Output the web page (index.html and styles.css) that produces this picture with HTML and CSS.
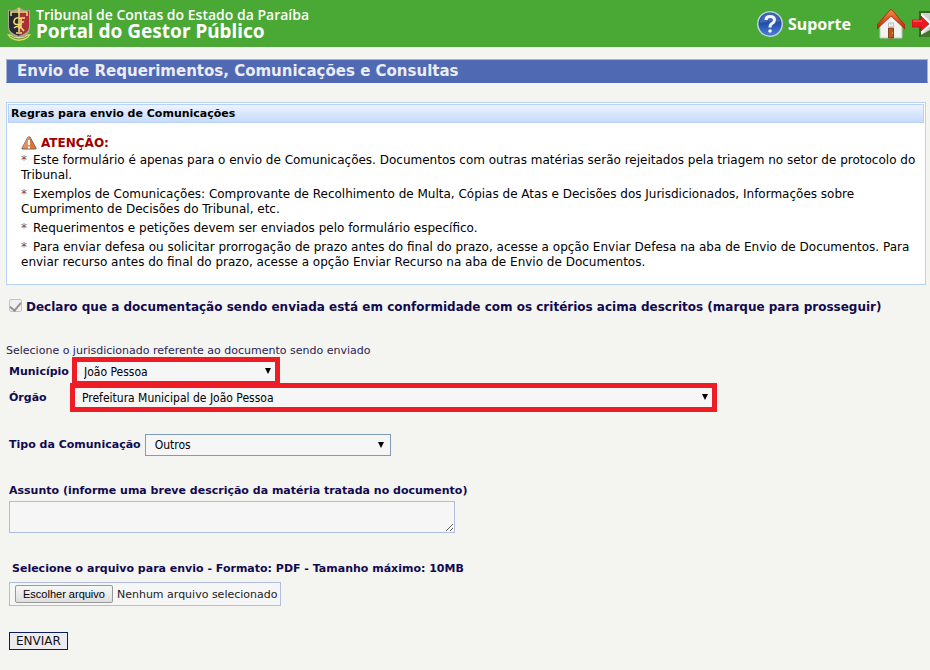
FILE: index.html
```html
<!DOCTYPE html>
<html lang="pt-BR">
<head>
<meta charset="utf-8">
<title>Portal do Gestor Público</title>
<link rel="stylesheet" href="styles.css">
</head>
<body>
<header class="topbar">
  <div class="brand">
    <svg class="crest" viewBox="0 0 24 34" aria-hidden="true">
      <path d="M1 3Q6 4 9 2L12 0l3 2q3 2 8 1v18q0 7-11 11Q1 28 1 21z" fill="#a9a58f"/>
      <path d="M2 4h10v25Q2 26 2 20z" fill="#292936"/>
      <path d="M12 4h10v16q0 6-10 9z" fill="#a92f3b"/>
      <path d="M4 9V5h16v4M12 1v24M9 26h6M15 12q-7-3-8 2t8 3M18 11h-4v10M17 15h-3M7 21q5-4 10 3" fill="none" stroke="#f4de72" stroke-width="1.500"/>
      <path d="M0 27q5 0 7 3h10q2-3 7-3l-3 4q-4 3-9 3t-9-3z" fill="#dfdc69"/>
      <path d="M3 29q4 3 9 3t9-3" fill="none" stroke="#76933d"/>
    </svg>
    <div class="brand-text">
      <div class="institution">Tribunal de Contas do Estado da Paraíba</div>
      <div class="portal">Portal do Gestor Público</div>
    </div>
  </div>
  <nav class="actions">
    <a class="support" href="#suporte">
      <svg class="help-icon" viewBox="0 0 28 28" aria-hidden="true">
        <defs><linearGradient id="blue" x2="0" y2="1"><stop stop-color="#244a9b"/><stop offset=".5" stop-color="#2450ae"/><stop offset="1" stop-color="#4a7fd6"/></linearGradient></defs>
        <circle cx="14" cy="14" r="13" fill="#bfd1dc"/><circle cx="14" cy="14" r="11.500" fill="url(#blue)"/>
        <path d="M4 13a10 10 0 0 1 20-1q-9-2-20 1" fill="#587cbd" opacity=".55"/>
        <path d="M10 10q0-3.500 4-3.500 4.500 0 4.500 3.500 0 2-2.500 3.500-2 1-2 4" fill="none" stroke="#f4f5f6" stroke-width="3"/><circle cx="14" cy="21" r="1.800" fill="#f4f5f6"/>
      </svg>
      <span>Suporte</span>
    </a>
    <a class="home" href="#inicio" aria-label="Início">
      <svg viewBox="0 0 28 30" aria-hidden="true">
        <defs><linearGradient id="roof" x2="0" y2="1"><stop stop-color="#ff8a4b"/><stop offset="1" stop-color="#b92305"/></linearGradient></defs>
        <path d="M3 15 14 4l11 11v14H3z" fill="#f2f2ee" stroke="#bcc7b7"/>
        <path d="M0 16 13 1q1-1 2 0l13 15v4L14 7 0 20z" fill="url(#roof)" stroke="#9d260d" stroke-width=".8"/>
        <path d="M11.500 19h5v10h-5z" fill="#bd551f" stroke="#87401d"/>
        <path d="M11.500 14h5v4h-5zM14 14v4" fill="#fff" stroke="#b9bdc1"/><circle cx="15.500" cy="24" r=".6" fill="#ffdc8a"/>
      </svg>
    </a>
    <a class="exit" href="#sair" aria-label="Sair">
      <svg viewBox="0 0 18 28" aria-hidden="true">
        <path d="M7 1h11v26H7z" fill="#356328"/><path d="M9 3h9v22H9z" fill="#cfd1cf"/><path d="M9 3l9 8v5L9 25z" fill="#f7f7f5"/><path d="M9 25l9-5v7H9z" fill="#427729"/>
        <path d="M0 10h9V6l8 8-8 7v-4H0z" fill="#f01820" stroke="#b30c12" stroke-width=".7"/><path d="M1 11h9" stroke="#ff7778"/>
      </svg>
    </a>
  </nav>
</header>
<main>
  <h1 class="page-title">Envio de Requerimentos, Comunicações e Consultas</h1>
  <section class="rules">
    <h2>Regras para envio de Comunicações</h2>
    <div class="rules-body">
      <h3><svg class="warning" viewBox="0 0 16 14" aria-hidden="true"><path d="M7 1h2l6 11v1H1v-1z" fill="#e1742c" stroke="#6d6d70"/><path d="M7 1h2v11H1z" fill="#eba477" opacity=".6"/><path d="M8 4v5m0 1.500v2" stroke="#fff" stroke-width="2"/></svg>ATENÇÃO:</h3>
      <p><span class="star">*</span>Este formulário é apenas para o envio de Comunicações. Documentos com outras matérias serão rejeitados pela triagem no setor de protocolo do Tribunal.</p>
      <p><span class="star">*</span>Exemplos de Comunicações: Comprovante de Recolhimento de Multa, Cópias de Atas e Decisões dos Jurisdicionados, Informações sobre Cumprimento de Decisões do Tribunal, etc.</p>
      <p><span class="star">*</span>Requerimentos e petições devem ser enviados pelo formulário específico.</p>
      <p><span class="star">*</span>Para enviar defesa ou solicitar prorrogação de prazo antes do final do prazo, acesse a opção Enviar Defesa na aba de Envio de Documentos. Para enviar recurso antes do final do prazo, acesse a opção Enviar Recurso na aba de Envio de Documentos.</p>
    </div>
  </section>
  <form>
    <div class="declare">
      <input type="checkbox" id="declaro" checked disabled>
      <label for="declaro">Declaro que a documentação sendo enviada está em conformidade com os critérios acima descritos (marque para prosseguir)</label>
    </div>
    <p class="hint">Selecione o jurisdicionado referente ao documento sendo enviado</p>
    <div class="row town">
      <label for="municipio">Município</label>
      <span class="select marked"><select id="municipio"><option>João Pessoa</option></select></span>
    </div>
    <div class="row agency">
      <label for="orgao">Órgão</label>
      <span class="select marked"><select id="orgao"><option>Prefeitura Municipal de João Pessoa</option></select></span>
    </div>
    <div class="row kind">
      <label for="tipo">Tipo da Comunicação</label>
      <span class="select"><select id="tipo"><option>Outros</option></select></span>
    </div>
    <div class="subject">
      <label for="assunto">Assunto (informe uma breve descrição da matéria tratada no documento)</label>
      <textarea id="assunto"></textarea>
    </div>
    <div class="upload">
      <label for="arquivo">Selecione o arquivo para envio - Formato: PDF - Tamanho máximo: 10MB</label>
      <div class="file">
        <button type="button">Escolher arquivo</button>
        <span>Nenhum arquivo selecionado</span>
        <input type="file" id="arquivo">
      </div>
    </div>
    <button class="send" type="submit">ENVIAR</button>
  </form>
</main>
</body>
</html>
```
FILE: styles.css
```css
* { box-sizing: border-box; }
body { margin: 0; background: #f4f5f0; color: #000; font-family: "DejaVu Sans", sans-serif; font-size: 12px; overflow-x: hidden; }
h1, h2, h3, p { margin: 0; }
svg { display: block; }

.topbar { display: flex; justify-content: space-between; align-items: center; height: 47px; padding-left: 7px; background: #4aa834; color: #fff; font-family: "Noto Sans", sans-serif; font-weight: bold; overflow: hidden; }
.brand { display: flex; align-items: center; gap: 5px; }
.crest { width: 24px; height: 34px; }
.institution { font-family: "Open Sans", sans-serif; font-size: 14px; font-weight: 600; line-height: 15px; }
.portal { font-size: 19px; line-height: 18px; }
.actions { display: flex; align-items: center; }
.actions a { color: #fff; text-decoration: none; }
.support { display: flex; align-items: center; gap: 4px; font-size: 16px; }
.help-icon { width: 28px; height: 28px; }
.home { width: 28px; margin-left: 26px; }
.exit { width: 18px; margin-left: 7px; }

main { padding: 12px 2px 20px 6px; }
.page-title { height: 24px; padding-left: 10px; border: 1px solid #a5b1d8; border-bottom-color: #5069b3; background: #5069b3; color: #ececf5; font-size: 15px; line-height: 23px; }

.rules { margin: 19px 2px 0 0; padding: 1px; border: 1px solid #b7d2f5; background: #fff; }
.rules h2 { padding-left: 2px; border: 1px solid #b7d2f5; background: linear-gradient(#eef4ff, #c6dafb); font-size: 11px; line-height: 17px; }
.rules-body { padding: 12px 6px 13px 13px; line-height: 15px; }
.rules h3 { display: flex; align-items: center; gap: 4px; color: #a00000; font-size: 12px; line-height: 16px; }
.warning { width: 16px; height: 14px; }
.rules p { margin-top: 4px; }
.rules h3 + p { margin-top: 2px; }
.star { display: inline-block; width: 12px; color: #8b4a2a; }

form { color: #120a4f; }
.declare { display: flex; align-items: flex-start; gap: 4px; margin-top: 14px; padding-left: 3px; font-size: 12px; font-weight: bold; line-height: 16px; }
.declare input { appearance: none; flex: none; width: 13px; height: 13px; margin: 0; border: 1px solid #c4c4c4; border-radius: 2px; background: #f0f0f0; }
.declare input::after { content: ""; display: block; width: 5px; height: 9px; margin: 0 auto; border: solid #929292; border-width: 0 2px 2px 0; transform: rotate(40deg); }
.hint { margin-top: 29px; font-size: 11px; line-height: 13px; color: #2a2358; }
.row { display: flex; align-items: center; padding-left: 3px; }
.row label, .subject label, .upload label { font-size: 11px; font-weight: bold; line-height: 14px; }
.town label { width: 63px; }
.agency label { width: 61px; }
.kind label { padding-right: 4px; }
.select { position: relative; display: flex; }
.select::after { content: ""; position: absolute; right: 7px; top: 8px; border: solid transparent; border-width: 6px 3px 0; border-top-color: #000; pointer-events: none; }
.select.marked::after { right: 9px; top: 11px; }
.select select { appearance: none; width: 100%; height: 22px; padding: 0 9px; border: 1px solid #7f9db9; border-radius: 0; background: #f6f6f6; color: #000; font: 12px "DejaVu Sans Condensed", "DejaVu Sans", sans-serif; }
.select.marked select { height: 29px; padding: 0 8px 0 7px; border: 5px solid #ee1c24; }
.town .select { width: 208px; }
.agency .select { width: 647px; }
.agency { margin-top: -3px; }
.kind .select { width: 246px; }
.kind { margin-top: 22px; }
.subject { display: flex; flex-direction: column; align-items: flex-start; gap: 3px; margin-top: 28px; padding-left: 3px; }
.subject textarea { width: 446px; height: 32px; border: 1px solid #b0bce0; background: #f6f6f6; }
.upload { margin-top: 29px; padding-left: 3px; }
.upload label { display: block; padding-left: 3px; }
.file { position: relative; display: inline-flex; align-items: center; gap: 4px; height: 24px; margin-top: 6px; padding: 0 3px 0 5px; border: 1px solid #b0bce0; background: #f6f6f6; color: #222; font-size: 11px; }
.file button { height: 18px; padding: 0 7px; border: 1px solid #999; border-radius: 2px; background: linear-gradient(#f8f8f8, #dedede); color: #000; font: 11px "Liberation Sans", sans-serif; }
.file input { position: absolute; inset: 0; width: 100%; height: 100%; opacity: 0; }
.send { display: block; height: 18px; margin: 26px 0 0 3px; padding: 0 6px; border: 1px solid #0a1f5c; background: #eeebf0; color: #111; font: 12px "DejaVu Sans", sans-serif; }
```
